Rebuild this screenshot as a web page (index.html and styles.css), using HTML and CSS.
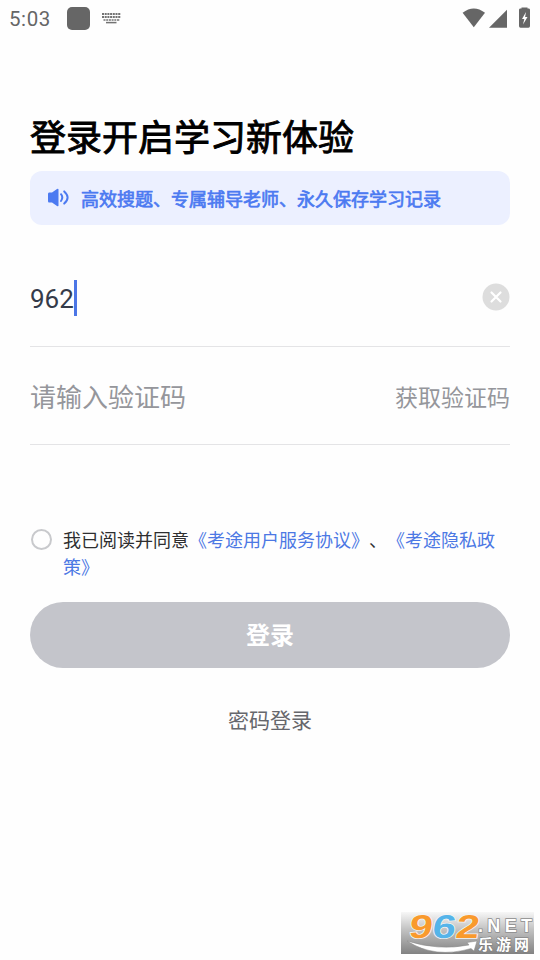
FILE: index.html
```
<!DOCTYPE html>
<html lang="zh-CN">
<head>
<meta charset="utf-8">
<title>登录</title>
<link rel="stylesheet" href="styles.css">
</head>
<body>
<div class="screen">
  <header class="status">
    <span class="clock">5:03</span>
    <span class="app-chip"></span>
    <svg class="keyboard" width="20" height="12" viewBox="0 0 20 12" fill="none" stroke="#737373" stroke-width="2">
      <path d="M0 2H19M0 5H19" stroke-dasharray="2 .7"/>
      <path d="M1.500 8H18" stroke-dasharray="2 .7" stroke-width="1.6"/>
      <path d="M4 10.6H14.500" stroke-width="1.5"/>
    </svg>
    <svg class="signals" width="70" height="24" viewBox="0 0 70 24" fill="#666">
      <path d="M.6 7.8Q11.8-.8 23 7.8L11.8 22.2Z"/>
      <path d="M27 22.8L45 4.7V22.8Z"/>
      <path d="M59.500 3.500V2.500H65.500V3.500H67Q68 3.500 68 5V21Q68 22.800 66.500 22.800H58.500Q57 22.800 57 21V5Q57 3.500 58 3.500Z"/>
      <path d="M64 7L60 14H62.3L61 19.5L65.5 12H63.1Z" fill="#fff"/>
    </svg>
  </header>
  <main class="login">
    <h1 class="title">登录开启学习新体验</h1>
    <div class="banner">
      <svg width="22" height="20" viewBox="0 0 22 20">
        <path d="M0 6Q0 4.500 1 4.500H4L9 .9Q10.500 .2 10.500 1.500V17.500Q10.500 18.800 9 18L4 14.500H1Q0 14.500 0 13Z" fill="#4c7af1"/>
        <path d="M13 6.200Q15.600 9.500 13 13M16.200 3.400Q23 9.500 16.200 15.600" fill="none" stroke="#4c7af1" stroke-width="2" stroke-linecap="round"/>
      </svg>
      <span class="banner-text">高效搜题、专属辅导老师、永久保存学习记录</span>
    </div>
    <div class="field phone">
      <span class="number">962</span><span class="caret"></span>
      <svg class="clear" width="28" height="28" viewBox="0 0 28 28">
        <circle cx="14" cy="14" r="13.5" fill="#ddd"/>
        <path d="M9.5 9.500L18.500 18.500M18.500 9.500L9.500 18.500" stroke="#fff" stroke-width="2.2" stroke-linecap="round"/>
      </svg>
    </div>
    <div class="field code">
      <span class="placeholder">请输入验证码</span>
      <span class="get-code">获取验证码</span>
    </div>
    <div class="agreement">
      <span class="radio"></span>
      <p class="terms">我已阅读并同意<span class="link">《考途用户服务协议》</span>、<span class="link">《考途隐私政策》</span></p>
    </div>
    <button class="submit" type="button"><span class="submit-label">登录</span></button>
    <a class="password">密码登录</a>
  </main>
  <svg class="watermark" width="133" height="42" viewBox="0 0 133 42">
    <defs>
      <linearGradient id="plate" x1="0" y1="0" x2="0" y2="1">
        <stop offset="0" stop-color="#f7f7f7"/><stop offset=".4" stop-color="#c4c4c4"/><stop offset="1" stop-color="#828282"/>
      </linearGradient>
    </defs>
    <rect width="133" height="42" fill="url(#plate)"/>
    <text class="digits" transform="translate(7 26) skewX(-8)" textLength="70" lengthAdjust="spacingAndGlyphs"><tspan class="orange">9</tspan><tspan class="sky">6</tspan><tspan class="orange">2</tspan></text>
    <path d="M6 29Q38 39 68 33L66 30.500L76 29L73 39L70 36.500Q34 47 6 29Z" fill="#fff" stroke="#888" stroke-width=".5"/>
    <text class="net" x="77" y="19.500" textLength="54" lengthAdjust="spacing">.NET</text>
    <text class="site" x="77" y="38" textLength="51" lengthAdjust="spacing">乐游网</text>
  </svg>
</div>
</body>
</html>
```
FILE: styles.css
```
* { box-sizing: border-box; }

body {
  margin: 0;
  background: #fff;
  font-family: Roboto, "Noto Sans CJK SC", sans-serif;
}

.screen {
  position: relative;
  width: 540px;
  height: 960px;
  overflow: hidden;
  background: #fefefe;
}

.status {
  display: flex;
  align-items: center;
  height: 37px;
  padding: 0 8px 0 9px;
}

.clock {
  width: 58px;
  font-size: 20.5px;
  letter-spacing: 0.6px;
  color: #666;
}

.app-chip {
  width: 23px;
  height: 23px;
  border-radius: 5px;
  background: #666;
}

.keyboard {
  margin: -1px 0 0 12px;
}

.signals {
  margin: -3px 0 0 auto;
}

.login {
  display: flex;
  flex-direction: column;
  padding: 76px 30px 0;
}

.title {
  margin: 0;
  height: 58px;
  font-size: 36px;
  line-height: 52px;
  font-weight: 400;
  color: #000;
  -webkit-text-stroke: 0.9px #000;
}

.banner {
  display: flex;
  align-items: center;
  height: 54px;
  padding-left: 18px;
  border-radius: 12px;
  background: #ecf0ff;
}

.banner-text {
  margin-left: 11px;
  font-size: 18px;
  color: #4c7af1;
  -webkit-text-stroke: 0.7px #4c7af1;
}

.field {
  display: flex;
  align-items: center;
  border-bottom: 1px solid #e4e4e6;
}

.phone {
  height: 98px;
  margin-top: 24px;
}

.number {
  padding-top: 2px;
  font-size: 26px;
  color: #343b4a;
}

.caret {
  width: 3px;
  height: 36px;
  background: #4c76e6;
}

.clear {
  margin: -2px 0 0 auto;
}

.code {
  height: 98px;
  justify-content: space-between;
  color: #95969b;
}

.placeholder { font-size: 26px; }

.get-code { font-size: 23px; }

.agreement {
  display: flex;
  margin-top: 81px;
}

.radio {
  width: 21px;
  height: 21px;
  margin: 3px 11px 0 1px;
  border: 2px solid #c8c9cc;
  border-radius: 50%;
  flex: none;
}

.terms {
  margin: 0;
  width: 447px;
  font-size: 18px;
  line-height: 27px;
  font-family: "Noto Sans CJK SC", sans-serif;
  text-spacing-trim: space-all;
  color: #2e2e30;
}

.link { color: #4c78e4; }

.submit {
  height: 66px;
  margin-top: 22px;
  padding: 0 0 4px;
  border: 0;
  border-radius: 33px;
  background: #c4c5cb;
  color: #fff;
  font-family: "Noto Sans CJK SC", sans-serif;
  font-size: 24px;
  font-weight: 700;
}

.password {
  margin-top: 37px;
  text-align: center;
  font-size: 21px;
  line-height: 32px;
  color: #66676c;
}

.watermark {
  position: absolute;
  left: 401px;
  top: 912px;
}

.digits {
  font: 700 33px "Liberation Sans", sans-serif;
  stroke: #f4f4f4;
  stroke-width: 1.5px;
  paint-order: stroke;
}

.orange { fill: #f99a2d; }

.sky { fill: #55b4e9; }

.net {
  font: 700 18px "Liberation Sans", sans-serif;
  fill: #fff;
  stroke: #8c8c8c;
  stroke-width: 1.5px;
  paint-order: stroke;
}

.site {
  font: 700 15px "Noto Sans CJK SC", sans-serif;
  fill: #fff;
  stroke: #777;
  stroke-width: 1px;
  paint-order: stroke;
}
```
